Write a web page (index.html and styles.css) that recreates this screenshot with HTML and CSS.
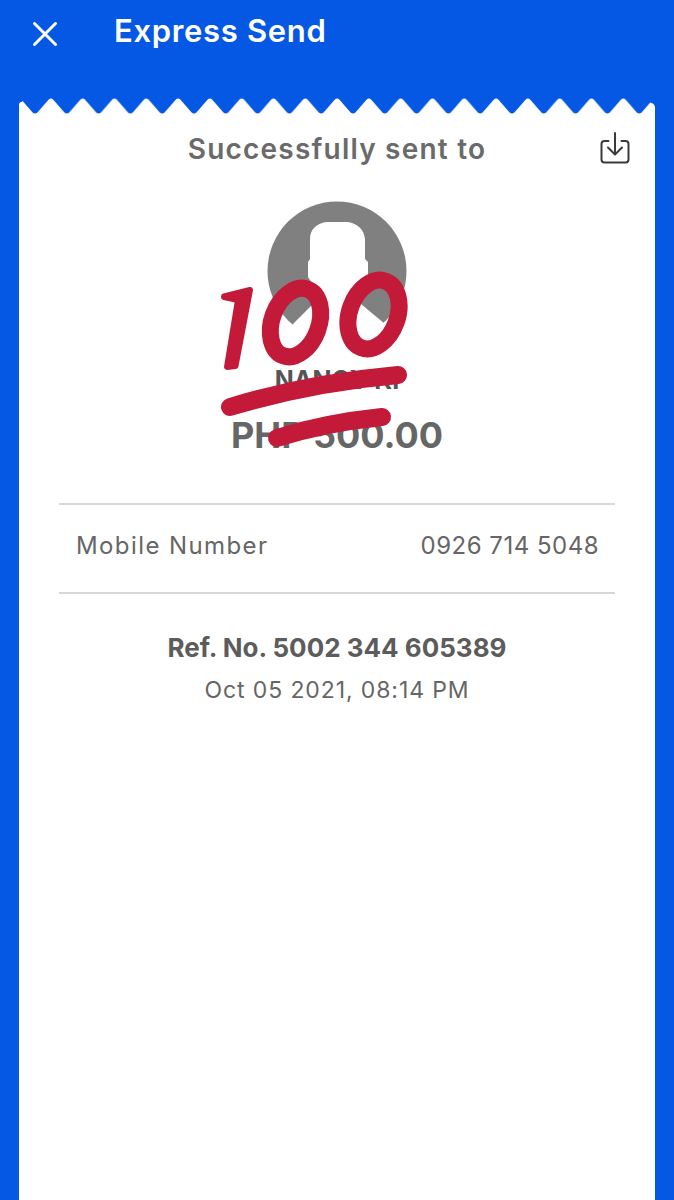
FILE: index.html
```html
<!DOCTYPE html>
<html lang="en">
<head>
<meta charset="utf-8">
<title>Express Send</title>
<link rel="stylesheet" href="styles.css">
</head>
<body>
<div class="screen">
  <header class="topbar">
    <svg class="close" viewBox="0 0 26 26" width="26" height="26"><path d="M2.5 2.5 23.5 23.5M23.5 2.5 2.5 23.5"/></svg>
    <h1 class="topbar-title">Express Send</h1>
  </header>
  <main class="receipt">
    <svg class="zigzag" viewBox="0 0 636 16" width="636" height="16">
      <defs>
        <pattern id="tooth" patternUnits="userSpaceOnUse" width="31.8" height="16" patternTransform="translate(16 0)">
          <path d="M0 16V15.500Q1.300 15.500 2.400 14.400L13.500 1.700Q14.700 0.500 15.900 0.500Q17.100 0.500 18.300 1.700L29.400 14.400Q30.500 15.500 31.800 15.500V16Z"/>
        </pattern>
      </defs>
      <rect class="zigzag-teeth" width="636" height="16" fill="url(#tooth)"/>
      <path class="zigzag-corner" d="M0 0H7L2.500 4Q1 3.600 0 6ZM636 0V9Q635 5 632 5L628 0Z"/>
    </svg>
    <div class="title-row">
      <span></span>
      <h2 class="sent-title">Successfully sent to</h2>
      <svg class="download" viewBox="0 0 30 32" width="30" height="32"><path d="M8.500 9H4.500A3 3 0 0 0 1.500 12V27.500A3 3 0 0 0 4.500 30.500H25.500A3 3 0 0 0 28.500 27.500V12A3 3 0 0 0 25.500 9H21.500M15 1V22M8 15.500 15 22.500 22 15.500"/></svg>
    </div>
    <section class="recipient">
      <svg class="avatar" viewBox="0 0 140 140" width="140" height="140"><circle cx="70" cy="70" r="69.500"/><path class="avatar-cut" d="M43 45V38C43 28 50 22 60 21H80C90 22 97 28 98 38V58L101 61V76L94 84V103L118 123 125 140H15L26 123 46 103V84L41 76V61L43 58Z"/></svg>
      <p class="name">NANCY KI</p>
      <p class="amount">PHP 500.00</p>
      <svg class="sticker" viewBox="0 0 200 180" width="200" height="180"><path class="one" d="M5 25.500 31 19 16.500 95 8 96 19 29 5 26Z"/><ellipse class="zero" cx="76.500" cy="51.500" rx="23.500" ry="35.500" transform="rotate(20 76.500 51.500)"/><ellipse class="zero" cx="154.500" cy="43.500" rx="24" ry="35.500" transform="rotate(20 154.500 43.500)"/><path class="line" d="M11 136Q90 112 179 104"/><path class="line" d="M58 167Q105 152 163 146"/></svg>
    </section>
    <div class="detail-row"><span class="detail-label">Mobile Number</span><span>0926 714 5048</span></div>
    <div class="reference">
      <p class="ref-no">Ref. No. 5002 344 605389</p>
      <p class="ref-date">Oct 05 2021, 08:14 PM</p>
    </div>
  </main>
</div>
</body>
</html>
```
FILE: styles.css
```css
* { box-sizing: border-box; }
html, body { margin: 0; padding: 0; }
body { font-family: Inter, "Liberation Sans", sans-serif; background: #0558e3; }
h1, h2, p { margin: 0; }
.screen { width: 674px; height: 1200px; overflow: hidden; background: #0558e3; display: flex; flex-direction: column; }
.topbar { height: 98px; flex: none; display: flex; align-items: flex-start; padding: 13px 0 0 32px; color: #fff; }
.close { margin-top: 8px; fill: none; stroke: #fff; stroke-width: 3; stroke-linecap: round; }
.topbar-title { margin-left: 56px; font-size: 31px; line-height: 36px; font-weight: 600; letter-spacing: 0.67px; white-space: nowrap; }
.receipt { flex: 1; margin: 0 19px; color: #666; display: flex; flex-direction: column; }
.zigzag { display: block; flex: none; }
.zigzag path { fill: #fff; }
.zigzag .zigzag-corner { fill: #0558e3; }
.receipt::after { content: ""; flex: 1; background: #fff; }
.title-row { background: #fff; display: grid; grid-template-columns: 1fr auto 1fr; align-items: start; padding: 18px 25px 0 25px; height: 87px; }
.sent-title { font-size: 28px; line-height: 34px; font-weight: 600; letter-spacing: 1.2px; color: #6a6a6a; white-space: nowrap; }
.download { justify-self: end; fill: none; stroke: #3a3a3a; stroke-width: 2; stroke-linecap: round; stroke-linejoin: round; }
.recipient { position: relative; background: #fff; height: 302px; display: flex; flex-direction: column; align-items: center; }
.avatar { flex: none; }
.avatar circle { fill: #808080; }
.avatar .avatar-cut { fill: #fff; }
.name { margin-top: 27px; font-size: 25px; line-height: 24px; font-weight: 700; color: #555; white-space: nowrap; }
.amount { margin-top: 21px; font-size: 36px; line-height: 44px; font-weight: 700; color: #666; }
.sticker { position: absolute; left: 200px; top: 70px; fill: none; stroke: #c21a38; stroke-linecap: round; stroke-linejoin: round; }
.one { fill: #c21a38; stroke-width: 6; }
.zero { stroke-width: 17; }
.line { stroke-width: 18; }
.detail-row { background: #fff; padding: 0 56px 6px 57px; height: 91px; display: flex; justify-content: space-between; align-items: center; font-size: 24px; color: #666; letter-spacing: 0.5px; background-image: linear-gradient(#d8d8d8, #d8d8d8), linear-gradient(#d8d8d8, #d8d8d8); background-size: 556px 2px; background-repeat: no-repeat; background-position: 40px 0, 40px 89px; }
.detail-label { letter-spacing: 1.4px; }
.reference { background: #fff; padding-top: 36px; text-align: center; }
.ref-no { font-size: 26px; line-height: 36px; font-weight: 700; color: #5c5c5c; }
.ref-date { margin-top: 9px; font-size: 23px; line-height: 30px; color: #666; letter-spacing: 0.9px; }
```
